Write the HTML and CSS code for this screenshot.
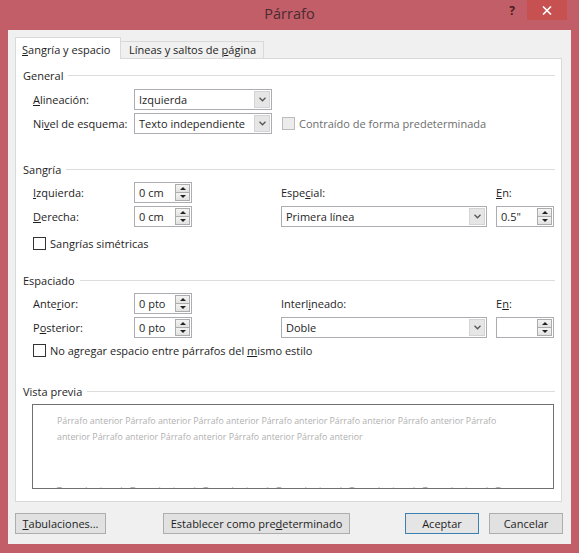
FILE: index.html
```html
<!DOCTYPE html>
<html lang="es">
<head>
<meta charset="utf-8">
<title>Párrafo</title>
<link rel="stylesheet" href="styles.css">
</head>
<body>
<div class="window">
  <div class="titlebar">
    <div class="title">Párrafo</div>
    <div class="controls">
      <div class="help">?</div>
      <div class="close">
        <svg width="10" height="9" viewBox="0 0 10 9"><path d="M1 0.5 L9 8.5 M9 0.5 L1 8.5" stroke="#fff" stroke-width="1.6" fill="none"/></svg>
      </div>
    </div>
  </div>
  <div class="client">
    <div class="tabs">
      <div class="tab active"><u>S</u>angría y espacio</div>
      <div class="tab second">Líneas y saltos de <u>p</u>ágina</div>
    </div>
    <div class="panel">
      <div class="group-head"><span>General</span></div>
      <div class="grid general-grid">
        <div class="label"><u>A</u>lineación:</div>
        <div class="field select"><span>Izquierda</span><span class="arrow"><svg width="7" height="5" viewBox="0 0 7 5"><path d="M0.5 0.8 L3.5 3.8 L6.5 0.8" stroke="#555" stroke-width="1.3" fill="none"/></svg></span></div>
        <div></div>
        <div class="label">Ni<u>v</u>el de esquema:</div>
        <div class="field select"><span>Texto independiente</span><span class="arrow"><svg width="7" height="5" viewBox="0 0 7 5"><path d="M0.5 0.8 L3.5 3.8 L6.5 0.8" stroke="#555" stroke-width="1.3" fill="none"/></svg></span></div>
        <div class="check disabled"><span class="box"></span><span>Contraído de forma predeterminada</span></div>
      </div>

      <div class="group-head sangria-head"><span>Sangría</span></div>
      <div class="grid pair-grid">
        <div class="label c1"><u>I</u>zquierda:</div>
        <div class="field spinfield c2"><span>0 cm</span><span class="spin"><span class="up"></span><span class="down"></span></span></div>
        <div class="label c4">Espe<u>c</u>ial:</div>
        <div class="label c6"><u>E</u>n:</div>
        <div class="label c1"><u>D</u>erecha:</div>
        <div class="field spinfield c2"><span>0 cm</span><span class="spin"><span class="up"></span><span class="down"></span></span></div>
        <div class="field select c4"><span>Primera línea</span><span class="arrow"><svg width="7" height="5" viewBox="0 0 7 5"><path d="M0.5 0.8 L3.5 3.8 L6.5 0.8" stroke="#555" stroke-width="1.3" fill="none"/></svg></span></div>
        <div class="field spinfield c6"><span>0.5"</span><span class="spin"><span class="up"></span><span class="down"></span></span></div>
      </div>
      <div class="check sym"><span class="box"></span><span>San<u>g</u>rías simétricas</span></div>

      <div class="group-head espaciado-head"><span>Espaciado</span></div>
      <div class="grid pair-grid">
        <div class="label c1">Ante<u>r</u>ior:</div>
        <div class="field spinfield c2"><span>0 pto</span><span class="spin"><span class="up"></span><span class="down"></span></span></div>
        <div class="label c4">Interl<u>i</u>neado:</div>
        <div class="label c6">E<u>n</u>:</div>
        <div class="label c1">P<u>o</u>sterior:</div>
        <div class="field spinfield c2"><span>0 pto</span><span class="spin"><span class="up"></span><span class="down"></span></span></div>
        <div class="field select c4"><span>Doble</span><span class="arrow"><svg width="7" height="5" viewBox="0 0 7 5"><path d="M0.5 0.8 L3.5 3.8 L6.5 0.8" stroke="#555" stroke-width="1.3" fill="none"/></svg></span></div>
        <div class="field spinfield c6"><span></span><span class="spin"><span class="up"></span><span class="down"></span></span></div>
      </div>
      <div class="check noadd"><span class="box"></span><span>No agregar espacio entre párrafos del <u>m</u>ismo estilo</span></div>

      <div class="group-head preview-head"><span>Vista previa</span></div>
      <div class="preview">
        <div class="pline">Párrafo anterior Párrafo anterior Párrafo anterior Párrafo anterior Párrafo anterior Párrafo anterior Párrafo</div>
        <div class="pline">anterior Párrafo anterior Párrafo anterior Párrafo anterior Párrafo anterior</div>
        <div class="pline next">Texto de ejemplo Texto de ejemplo Texto de ejemplo Texto de ejemplo Texto de ejemplo Texto de ejemplo Texto</div>
      </div>
    </div>
    <div class="buttons">
      <div class="btn tabs-btn"><u>T</u>abulaciones...</div>
      <div class="btn default-btn">Establecer como pre<u>d</u>eterminado</div>
      <div class="btn ok-btn">Aceptar</div>
      <div class="btn cancel-btn">Cancelar</div>
    </div>
  </div>
</div>
</body>
</html>
```

FILE: styles.css
```css
* { box-sizing: border-box; }

body {
  margin: 0;
  font-family: "Open Sans", "Noto Sans", sans-serif;
  font-size: 11px;
  color: #1e1e1e;
  background: #c25e68;
}

u { text-decoration: underline; text-underline-offset: 1px; }

.window {
  width: 579px;
  height: 553px;
  background: #c25e68;
  display: flex;
  flex-direction: column;
}

.titlebar {
  height: 30px;
  display: grid;
  grid-template-columns: 1fr auto 1fr;
  align-items: start;
}

.title {
  grid-column: 2;
  font-size: 14.5px;
  line-height: 28px;
  color: #4a2a30;
}

.controls {
  grid-column: 3;
  justify-self: end;
  display: flex;
  margin-right: 12px;
}

.help {
  width: 30px;
  height: 20px;
  display: flex;
  align-items: center;
  justify-content: center;
  font-weight: bold;
  font-size: 12px;
  color: #4a1c22;
}

.close {
  width: 40px;
  height: 20px;
  background: #c75050;
  display: flex;
  align-items: center;
  justify-content: center;
}

.client {
  flex: 1;
  margin: 0 8px 9px 8px;
  background: #f0f0f0;
  padding: 7px 9px 0 7px;
  display: flex;
  flex-direction: column;
}

.tabs {
  display: flex;
  align-items: flex-end;
  height: 21px;
}

.tab {
  border: 1px solid #d9d9d9;
  border-bottom: none;
  background: #f0f0f0;
  white-space: nowrap;
}

.tab.active {
  width: 106px;
  height: 22px;
  margin-bottom: -1px;
  background: #fff;
  padding: 2px 0 0 6px;
  line-height: 19px;
  position: relative;
  z-index: 1;
}

.tab.second {
  width: 143px;
  height: 17px;
  border-left: none;
  padding-left: 8px;
  line-height: 16px;
}

.panel {
  height: 444px;
  border: 1px solid #d9d9d9;
  background: #fff;
  padding: 8px 6px 0 7px;
}

.group-head {
  display: flex;
  align-items: center;
  height: 16px;
  gap: 5px;
  color: #1e1e1e;
}

.group-head::after {
  content: "";
  flex: 1;
  height: 1px;
  background: #dcdcdc;
}

.sangria-head { margin-top: 27px; }
.espaciado-head { margin-top: 21px; }
.preview-head { margin-top: 25px; }

.grid {
  display: grid;
  margin-left: 10px;
  grid-template-rows: 21px 21px;
  row-gap: 3px;
  align-items: center;
}

.general-grid {
  margin-top: 6px;
  grid-template-columns: 101px 138px auto;
}

.pair-grid {
  margin-top: 5px;
  grid-template-columns: 101px 58px 89px 206px 9px 58px;
}

.c1 { grid-column: 1; }
.c2 { grid-column: 2; }
.c4 { grid-column: 4; }
.c6 { grid-column: 6; }

.label { white-space: nowrap; }

.field {
  height: 21px;
  border: 1px solid #abadb3;
  background: #fff;
  display: flex;
  align-items: center;
  padding-left: 4px;
  white-space: nowrap;
}

.arrow {
  margin-left: auto;
  margin-right: 1px;
  width: 16px;
  height: 17px;
  background: #e6e6e6;
  border: 1px solid #d4d4d4;
  display: flex;
  align-items: center;
  justify-content: center;
}

.spin {
  margin-left: auto;
  margin-right: 1px;
  width: 15px;
  height: 17px;
  display: flex;
  flex-direction: column;
  border: 1px solid #acacac;
}

.spin .up, .spin .down {
  flex: 1;
  background: linear-gradient(#f4f4f4, #e2e2e2);
  display: flex;
  align-items: center;
  justify-content: center;
}

.spin .up { border-bottom: 1px solid #acacac; }

.spin .up::before {
  content: "";
  border-left: 3px solid transparent;
  border-right: 3px solid transparent;
  border-bottom: 3px solid #222;
}

.spin .down::before {
  content: "";
  border-left: 3px solid transparent;
  border-right: 3px solid transparent;
  border-top: 3px solid #222;
}

.check {
  display: flex;
  align-items: center;
  gap: 4px;
  height: 16px;
  white-space: nowrap;
}

.check .box {
  width: 13px;
  height: 13px;
  border: 1px solid #333;
  background: #fff;
}

.check.disabled { margin-left: 10px; color: #6d6d6d; }
.check.disabled .box { border-color: #bcbcbc; background: #ececec; }

.sym, .noadd { margin-left: 10px; }
.sym { margin-top: 8px; }
.noadd { margin-top: 4px; }

.preview {
  margin: 5px 1px 0 9px;
  height: 85px;
  border: 1px solid #707070;
  background: #fff;
  padding: 8px 0 0 24px;
  overflow: hidden;
  font-size: 8.8px;
  color: #b0b0b0;
}

.pline {
  white-space: nowrap;
  line-height: 16px;
}

.pline.next { margin-top: 38px; color: #a8a8a8; }

.buttons {
  display: flex;
  margin-top: 11px;
  height: 21px;
}

.btn {
  height: 21px;
  border: 1px solid #adadad;
  background: #e1e1e1;
  display: flex;
  align-items: center;
  justify-content: center;
  white-space: nowrap;
}

.tabs-btn { width: 91px; }
.default-btn { width: 187px; margin-left: 57px; }
.ok-btn { width: 74px; margin-left: auto; border-color: #3c7fb1; background: #e5e5e5; }
.cancel-btn { width: 74px; margin-left: 10px; margin-right: -1px; }
```
